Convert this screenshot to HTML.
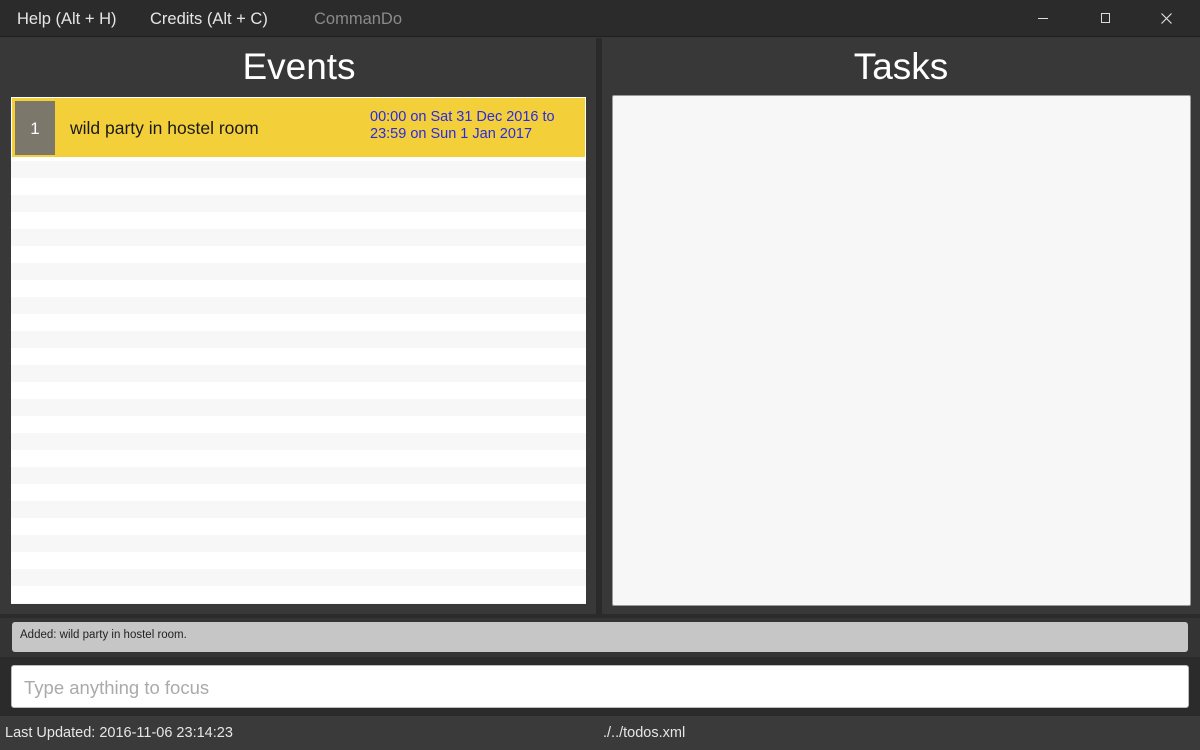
<!DOCTYPE html>
<html><head><style>
*{margin:0;padding:0;box-sizing:border-box}
body{width:1200px;height:750px;background:#383838;font-family:"Segoe UI","Liberation Sans",sans-serif;position:relative;overflow:hidden}
.abs{position:absolute}
.title{left:0;top:0;width:1200px;height:37px;background:#2b2b2b;border-bottom:1px solid #1e1e1e}
.menu{top:10px;font-size:16.5px;color:#e6e6e6}
.h{top:46px;font-size:37px;color:#fff;text-align:center;font-weight:300}
.list{left:11px;top:97px;width:575px;height:507px;background-color:#fff;
background-image:repeating-linear-gradient(to bottom,#f7f7f7 0,#f7f7f7 17px,#fff 17px,#fff 34px);
background-position:0 64px;background-size:100% 34px;background-repeat:repeat}
</style></head><body>
<div class="abs title"></div>
<div class="abs menu" style="left:17px">Help (Alt + H)</div>
<div class="abs menu" style="left:150px">Credits (Alt + C)</div>
<div class="abs menu" style="left:314px;color:#8a8a8a">CommanDo</div>
<div class="abs" style="left:1038px;top:18px;width:10px;height:1px;background:#ddd"></div>
<div class="abs" style="left:1101px;top:13px;width:9px;height:10px;border:1px solid #ddd"></div>
<svg class="abs" style="left:1161px;top:13px" width="11" height="11"><path d="M0.5 0.5L10.5 10.5M10.5 0.5L0.5 10.5" stroke="#ddd" stroke-width="1.2"/></svg>

<div class="abs" style="left:596px;top:38px;width:6px;height:576px;background:#2a2a2a"></div>
<div class="abs h" style="left:0;width:598px">Events</div>
<div class="abs h" style="left:602px;width:598px">Tasks</div>

<div class="abs list"></div>
<div class="abs" style="left:11px;top:97px;width:575px;height:61px;background:#f3cf3a;border:1px solid #fff"></div>
<div class="abs" style="left:15px;top:101px;width:40px;height:54px;background:#7b776a;color:#fff;font-size:17px;text-align:center;line-height:56px">1</div>
<div class="abs" style="left:70px;top:118px;font-size:17.5px;color:#1a1a1a">wild party in hostel room</div>
<div class="abs" style="left:370px;top:109px;font-size:14.5px;line-height:17px;color:#2a2ae0">00:00 on Sat 31 Dec 2016 to<br>23:59 on Sun 1 Jan 2017</div>

<div class="abs" style="left:612px;top:95px;width:579px;height:511px;background:#f7f7f7;border:1px solid #9a9a9a;border-radius:2px"></div>

<div class="abs" style="left:0;top:614px;width:1200px;height:101px;background:#2b2b2b"></div>
<div class="abs" style="left:0;top:618px;width:1200px;height:39px;background:#343434"></div>
<div class="abs" style="left:12px;top:622px;width:1176px;height:30px;background:#c6c6c6;border-radius:3px;font-size:11.5px;color:#222;padding:7px 0 0 8px">Added: wild party in hostel room.</div>
<div class="abs" style="left:11px;top:665px;width:1178px;height:43px;background:#fff;border:1px solid #bbb;border-radius:3px;font-size:18.5px;color:#aaa;padding:11px 0 0 12px">Type anything to focus</div>
<div class="abs" style="left:0;top:715px;width:1200px;height:35px;background:#3a3a3a;border-top:1px solid #2a2a2a"></div>
<div class="abs" style="left:5px;top:725px;font-size:14.5px;color:#e6e6e6">Last Updated: 2016-11-06 23:14:23</div>
<div class="abs" style="left:603px;top:725px;font-size:14.5px;color:#e6e6e6">./../todos.xml</div>
</body></html>
